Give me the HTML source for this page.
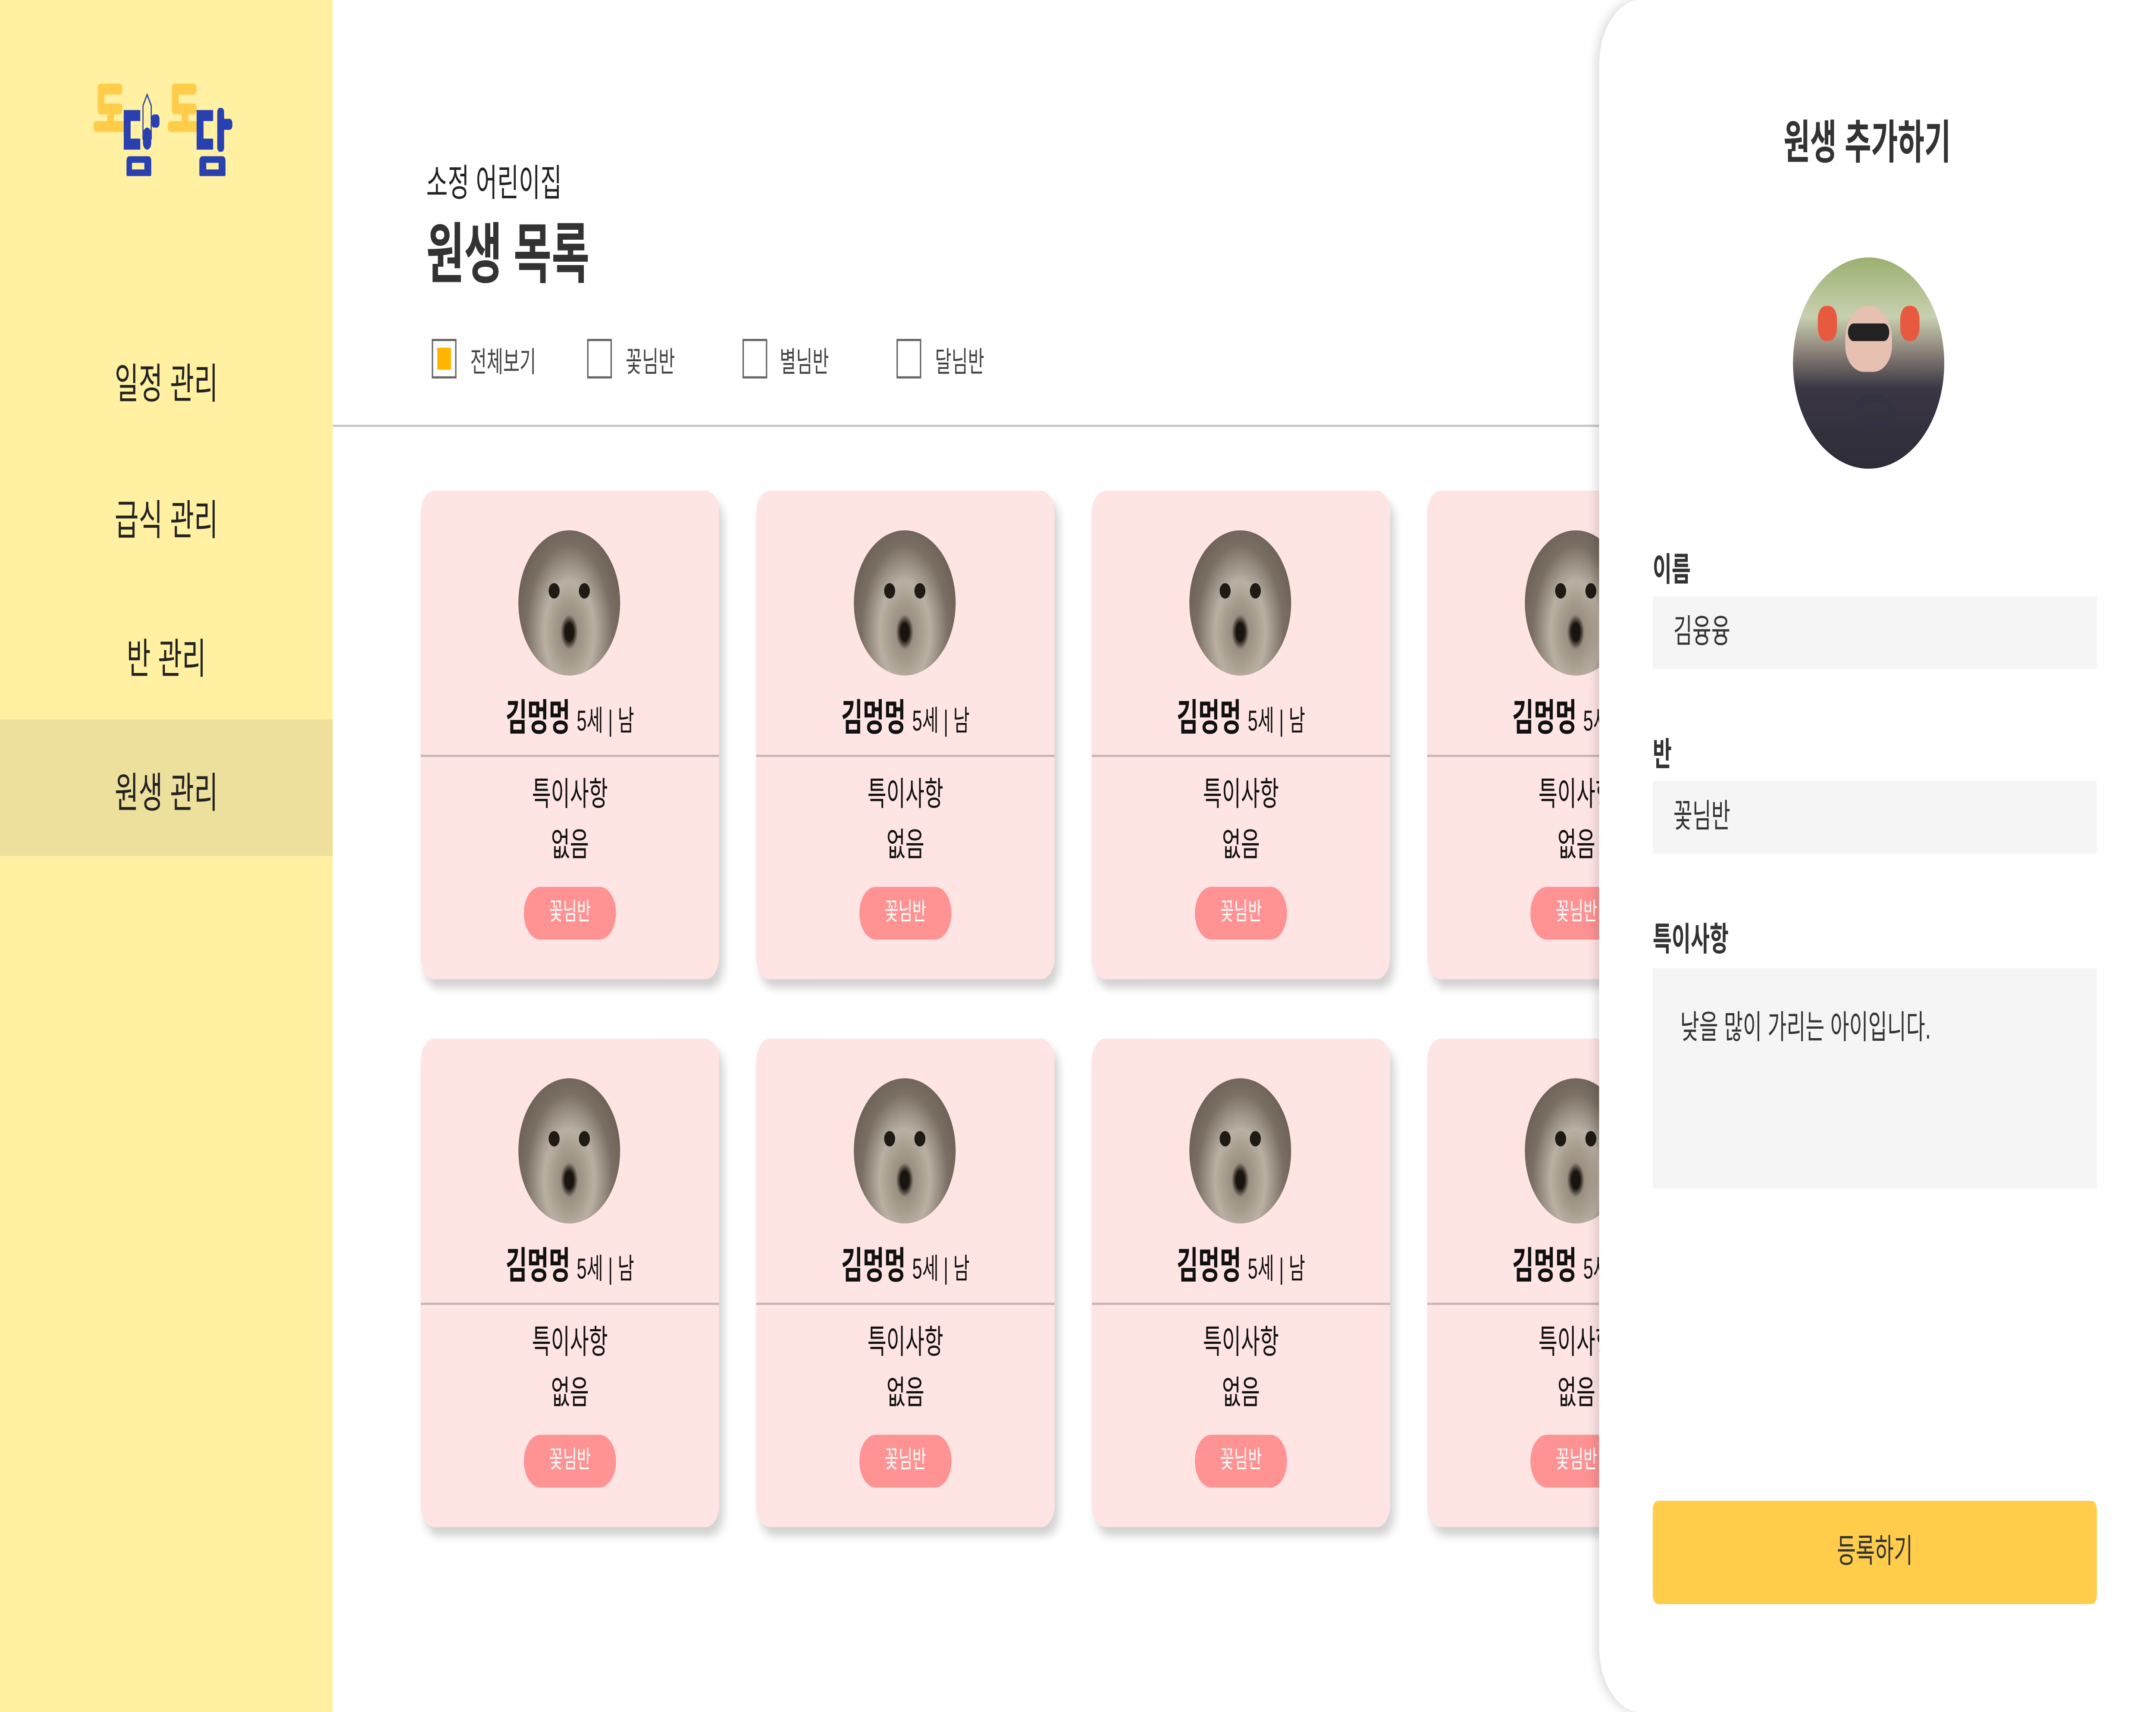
<!DOCTYPE html>
<html><head><meta charset="utf-8"><style>
html,body{margin:0;padding:0;width:100vw;height:100vh;overflow:hidden;background:#fff}
#o{position:relative;width:100vw;height:100vh;overflow:hidden}
#w{position:absolute;left:0;top:0;width:1568px;height:778px;overflow:hidden;transform-origin:0 0;font-family:"Liberation Sans","Noto Sans CJK KR",sans-serif;color:#111}
.a{position:absolute}
.side{left:0;top:0;width:242px;height:778px;background:#fff0a2}
.menu{left:0;width:242px;text-align:center;font-size:19px;color:#222}
.card{width:217px;height:222px;background:#ffe4e4;border-radius:10px;box-shadow:3px 4px 5px rgba(0,0,0,.18);position:absolute;overflow:hidden}
.dog{position:absolute;left:71px;top:18px;width:74px;height:66px;border-radius:50%;background:radial-gradient(ellipse at 50% 70%,#1a1410 0 6%,#9a8f80 12%,#b9b0a3 35%,#7a6f62 60%,#5a5046 100%)}
.dog:before,.dog:after{content:"";position:absolute;top:24px;width:8px;height:7px;border-radius:50%;background:#201a15}
.dog:before{left:22px}.dog:after{right:22px}
.nm{position:absolute;left:0;width:217px;top:89px;text-align:center;font-size:17px;font-weight:bold}
.nm span{font-size:13px;font-weight:normal}
.dv{position:absolute;left:0;top:120px;width:217px;height:1px;background:#c8b4b4}
.t1{position:absolute;left:0;width:217px;top:127px;text-align:center;font-size:15px}
.t2{position:absolute;left:0;width:217px;top:150px;text-align:center;font-size:15px}
.pill{position:absolute;left:75px;top:180px;width:67px;height:24px;border-radius:12px;background:#ff9393;color:#fff;font-size:11px;text-align:center;line-height:24px}
.cb{position:absolute;top:154px;width:18px;height:18px;border:1px solid #666;box-sizing:border-box}
.cl{position:absolute;top:154px;font-size:13px;color:#444}
.lbl{position:absolute;left:1202px;font-size:15px;font-weight:bold;color:#333}
.inp{position:absolute;left:1202px;width:323px;background:#f5f5f5;font-size:15px;color:#333;box-sizing:border-box;padding-left:15px}
</style></head><body><div id="o"><div id="w">
<div class="a side"></div>
<div class="a" style="left:68px;top:34px;width:110px;height:46px">
<svg width="110" height="46" viewBox="0 0 110 46">
<g fill="#ffcd4a"><rect x="3" y="4" width="18" height="5" rx="2"/><rect x="3" y="4" width="5" height="13" rx="2"/><rect x="3" y="13" width="18" height="5" rx="2"/><rect x="10" y="13" width="5" height="12" rx="1"/><rect x="0" y="21" width="26" height="5" rx="2"/>
<rect x="57" y="4" width="18" height="5" rx="2"/><rect x="57" y="4" width="5" height="13" rx="2"/><rect x="57" y="13" width="18" height="5" rx="2"/><rect x="64" y="13" width="5" height="12" rx="1"/><rect x="54" y="21" width="26" height="5" rx="2"/></g>
<g fill="#2840b0"><path d="M22 16h12v5h-7v8h7v5H22z"/><rect x="24" y="37" width="18" height="10" rx="2"/><rect x="42" y="18" width="6" height="6" rx="2"/><rect x="36" y="24" width="6" height="10" rx="3"/>
<path d="M75 16h12v5h-7v8h7v5H75z"/><rect x="90" y="15" width="5" height="20" rx="2"/><rect x="93" y="20" width="8" height="5" rx="2"/><rect x="77" y="37" width="19" height="10" rx="2"/></g>
<g fill="#fff0a2"><rect x="28" y="40" width="9" height="3"/><rect x="82" y="40" width="9" height="3"/></g>
<path d="M36 14l3-5 3 5v15h-6z" fill="none" stroke="#2840b0" stroke-width="0.8"/>
</svg></div>
<div class="a menu" style="top:160px">일정 관리</div>
<div class="a menu" style="top:222px">급식 관리</div>
<div class="a menu" style="top:285px">반 관리</div>
<div class="a" style="left:0;top:327px;width:242px;height:62px;background:#ede09d"></div>
<div class="a menu" style="top:346px">원생 관리</div>

<div class="a" style="left:310px;top:69px;font-size:17px;color:#222">소정 어린이집</div>
<div class="a" style="left:310px;top:91px;font-size:30px;font-weight:bold;color:#333">원생 목록</div>
<div class="cb" style="left:314px"><div style="position:absolute;left:3px;top:3px;width:10px;height:10px;background:#ffb400"></div></div>
<div class="cl" style="left:342px">전체보기</div>
<div class="cb" style="left:427px"></div><div class="cl" style="left:455px">꽃님반</div>
<div class="cb" style="left:540px"></div><div class="cl" style="left:567px">별님반</div>
<div class="cb" style="left:652px"></div><div class="cl" style="left:680px">달님반</div>
<div class="a" style="left:242px;top:193px;width:930px;height:1px;background:#c8c8c8"></div>

<div class="card" style="left:306px;top:223px"><div class="dog"></div><div class="nm">김멍멍 <span>5세 | 남</span></div><div class="dv"></div><div class="t1">특이사항</div><div class="t2">없음</div><div class="pill">꽃님반</div></div>
<div class="card" style="left:550px;top:223px"><div class="dog"></div><div class="nm">김멍멍 <span>5세 | 남</span></div><div class="dv"></div><div class="t1">특이사항</div><div class="t2">없음</div><div class="pill">꽃님반</div></div>
<div class="card" style="left:794px;top:223px"><div class="dog"></div><div class="nm">김멍멍 <span>5세 | 남</span></div><div class="dv"></div><div class="t1">특이사항</div><div class="t2">없음</div><div class="pill">꽃님반</div></div>
<div class="card" style="left:1038px;top:223px"><div class="dog"></div><div class="nm">김멍멍 <span>5세 | 남</span></div><div class="dv"></div><div class="t1">특이사항</div><div class="t2">없음</div><div class="pill">꽃님반</div></div>
<div class="card" style="left:306px;top:472px"><div class="dog"></div><div class="nm">김멍멍 <span>5세 | 남</span></div><div class="dv"></div><div class="t1">특이사항</div><div class="t2">없음</div><div class="pill">꽃님반</div></div>
<div class="card" style="left:550px;top:472px"><div class="dog"></div><div class="nm">김멍멍 <span>5세 | 남</span></div><div class="dv"></div><div class="t1">특이사항</div><div class="t2">없음</div><div class="pill">꽃님반</div></div>
<div class="card" style="left:794px;top:472px"><div class="dog"></div><div class="nm">김멍멍 <span>5세 | 남</span></div><div class="dv"></div><div class="t1">특이사항</div><div class="t2">없음</div><div class="pill">꽃님반</div></div>
<div class="card" style="left:1038px;top:472px"><div class="dog"></div><div class="nm">김멍멍 <span>5세 | 남</span></div><div class="dv"></div><div class="t1">특이사항</div><div class="t2">없음</div><div class="pill">꽃님반</div></div>

<div class="a" style="left:1163px;top:0;width:405px;height:778px;background:#fff;border-radius:30px 0 0 30px;box-shadow:-2px 0 6px rgba(0,0,0,.15)"></div>
<div class="a" style="left:1163px;top:49px;width:390px;text-align:center;font-size:21px;font-weight:bold;color:#333">원생 추가하기</div>
<div class="a" style="left:1304px;top:117px;width:110px;height:96px;border-radius:50%;overflow:hidden;background:linear-gradient(180deg,#9ab070 0%,#c8d0b0 28%,#8a8078 45%,#3a3644 62%,#2e2c38 100%)">
<div class="a" style="left:38px;top:22px;width:34px;height:30px;border-radius:50% 50% 40% 40%;background:#e6c0b0"></div>
<div class="a" style="left:40px;top:30px;width:30px;height:8px;border-radius:4px;background:#222"></div>
<div class="a" style="left:18px;top:22px;width:14px;height:16px;border-radius:6px;background:#e85a40"></div>
<div class="a" style="left:78px;top:22px;width:14px;height:16px;border-radius:6px;background:#e85a40"></div>
<div class="a" style="left:44px;top:62px;width:30px;height:16px;border:4px solid #334;border-radius:50%;box-sizing:border-box"></div>
</div>
<div class="lbl" style="top:248px">이름</div>
<div class="inp" style="top:271px;height:33px;line-height:33px">김융융</div>
<div class="lbl" style="top:332px">반</div>
<div class="inp" style="top:355px;height:33px;line-height:33px">꽃님반</div>
<div class="lbl" style="top:416px">특이사항</div>
<div class="inp" style="top:440px;height:100px;padding:16px 0 0 20px">낮을 많이 가리는 아이입니다.</div>
<div class="a" style="left:1202px;top:682px;width:323px;height:47px;background:#ffcd4a;border-radius:4px;text-align:center;line-height:47px;font-size:15px;color:#333">등록하기</div>
</div></div>
<script>
(function(){var w=document.getElementById('w');function f(){var sx=window.innerWidth/1568,sy=window.innerHeight/778;w.style.transform='scale('+sx+','+sy+')';}f();window.addEventListener('resize',f);})();
</script>
</body></html>
